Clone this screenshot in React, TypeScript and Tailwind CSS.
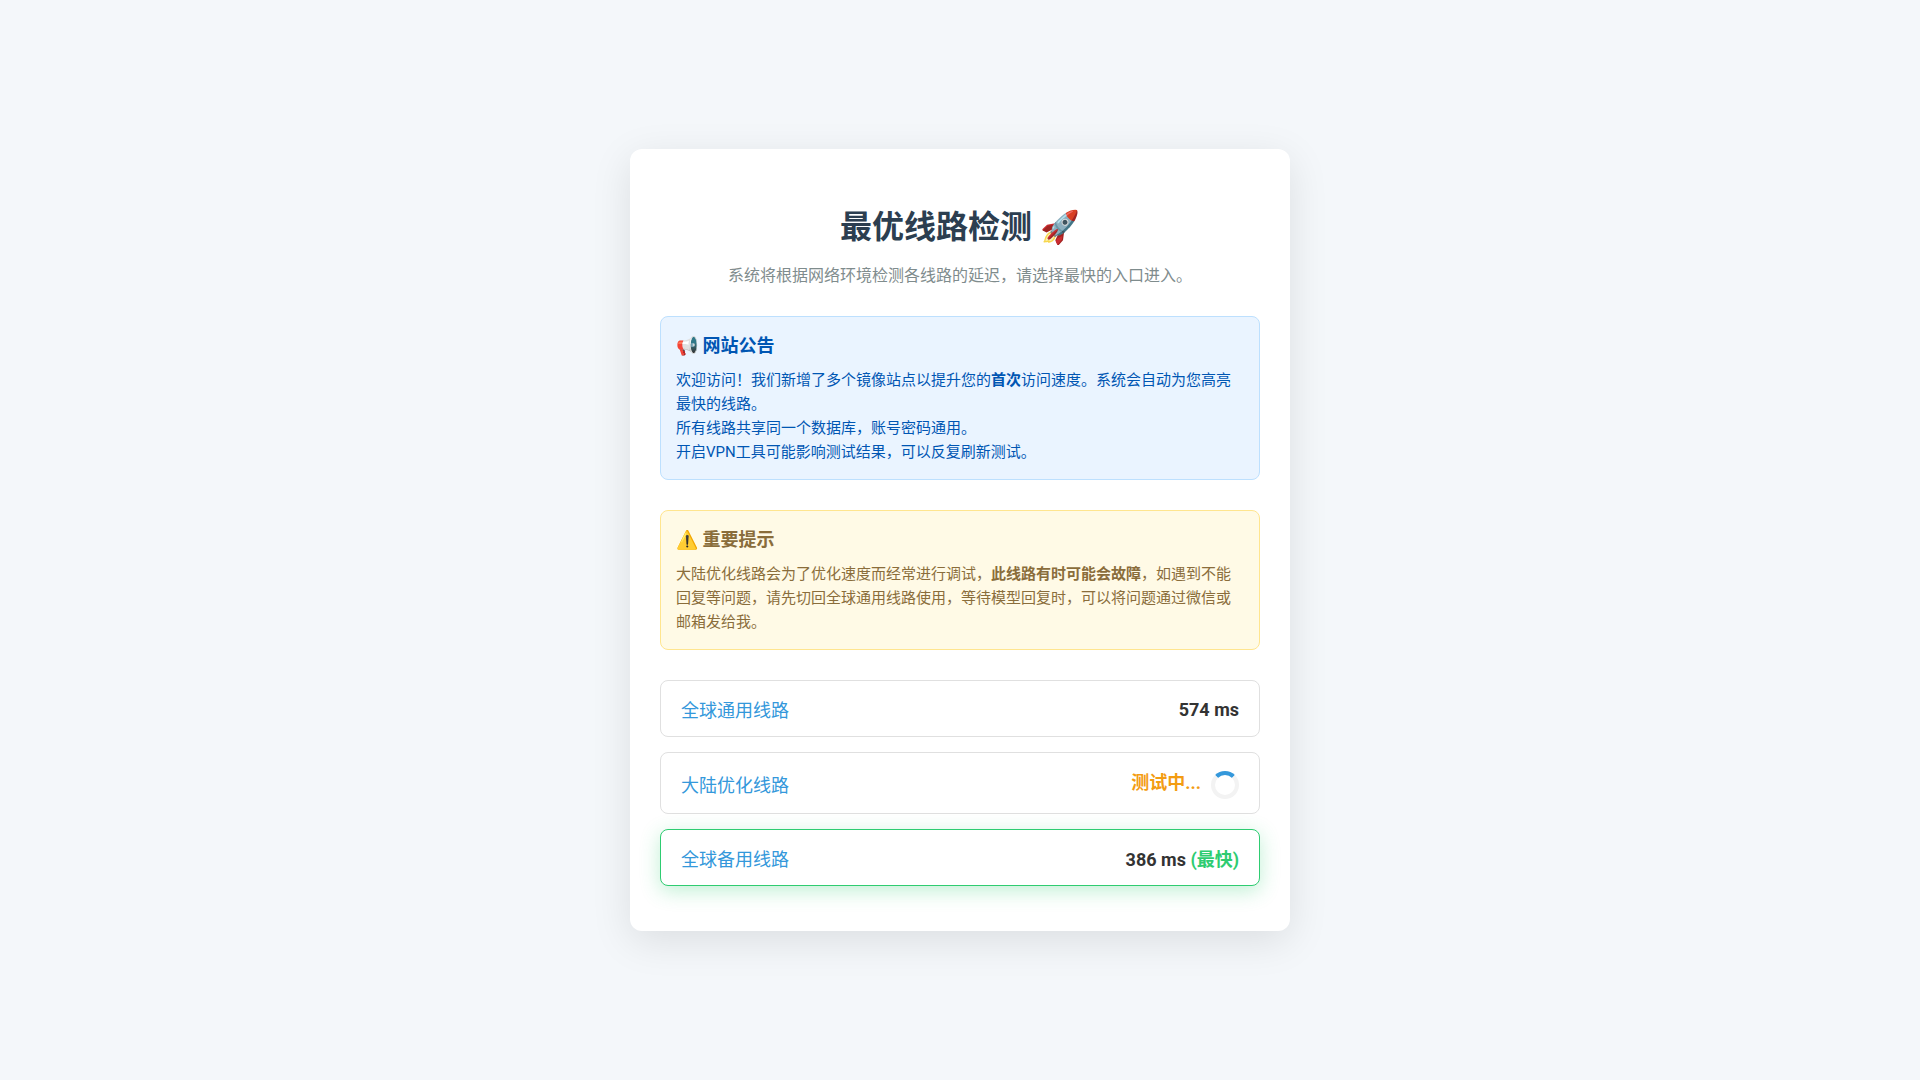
import React from "react";

type Line = { name: string; latency: number | null; fastest?: boolean };

const lines: Line[] = [
  { name: "全球通用线路", latency: 574 },
  { name: "大陆优化线路", latency: null },
  { name: "全球备用线路", latency: 386, fastest: true },
];

function LineRow({ line }: { line: Line }) {
  return (
    <li
      className={
        line.fastest
          ? "flex items-center justify-between rounded-lg border border-[#2ecc71] bg-white px-5 pt-[15px] pb-[14px] shadow-[0_5px_20px_rgba(46,204,113,0.3)]"
          : "flex items-center justify-between rounded-lg border border-[#e0e0e0] bg-white px-5 pt-[15px] pb-[14px]"
      }
    >
      <a href="#" className="text-[#3498db]">{line.name}</a>
      {line.latency === null ? (
        <span className="font-bold text-[#f39c12]">
          测试中...
          <span className="ml-2.5 inline-block size-7 rounded-full border-4 border-[#f3f3f3] border-t-[#3498db] align-middle" />
        </span>
      ) : (
        <span className="font-bold text-[#333333]">
          {line.latency} ms
          {line.fastest && <span className="text-[#2ecc71]"> (最快)</span>}
        </span>
      )}
    </li>
  );
}

export default function App() {
  return (
    <main className="flex min-h-screen items-center justify-center bg-[#f4f7fa] font-[Roboto,'Noto_Sans_CJK_SC',sans-serif] text-[#333333]">
      <div className="w-full max-w-[660px] rounded-xl bg-white px-[30px] pt-[52px] pb-[45px] shadow-[0_10px_40px_rgba(0,0,0,0.1)]">
        <h1 className="text-center text-[32px] leading-[52px] font-bold text-[#2c3e50]">最优线路检测 🚀</h1>
        <p className="mt-2.5 mb-[27px] text-center text-base leading-[26px] text-[#7f8c8d]">
          系统将根据网络环境检测各线路的延迟，请选择最快的入口进入。
        </p>
        <section className="mb-[30px] rounded-lg border border-[#bde0fe] bg-[#eaf4ff] p-[15px] text-[#0056b3]">
          <h2 className="mb-2 text-lg leading-7 font-bold">📢 网站公告</h2>
          <p className="text-[15px] leading-6">
            欢迎访问！我们新增了多个镜像站点以提升您的<strong>首次</strong>访问速度。系统会自动为您高亮最快的线路。
            <br />
            所有线路共享同一个数据库，账号密码通用。
            <br />
            开启VPN工具可能影响测试结果，可以反复刷新测试。
          </p>
        </section>
        <section className="mb-[30px] rounded-lg border border-[#ffe58f] bg-[#fffae6] p-[15px] text-[#8a6d3b]">
          <h2 className="mb-2 text-lg leading-7 font-bold">⚠️ 重要提示</h2>
          <p className="text-[15px] leading-6">
            大陆优化线路会为了优化速度而经常进行调试，<strong>此线路有时可能会故障</strong>，如遇到不能回复等问题，请先切回全球通用线路使用，等待模型回复时，可以将问题通过微信或邮箱发给我。
          </p>
        </section>
        <ul className="flex flex-col gap-[15px] text-lg leading-[normal]">
          {lines.map((line) => (
            <LineRow key={line.name} line={line} />
          ))}
        </ul>
      </div>
    </main>
  );
}
